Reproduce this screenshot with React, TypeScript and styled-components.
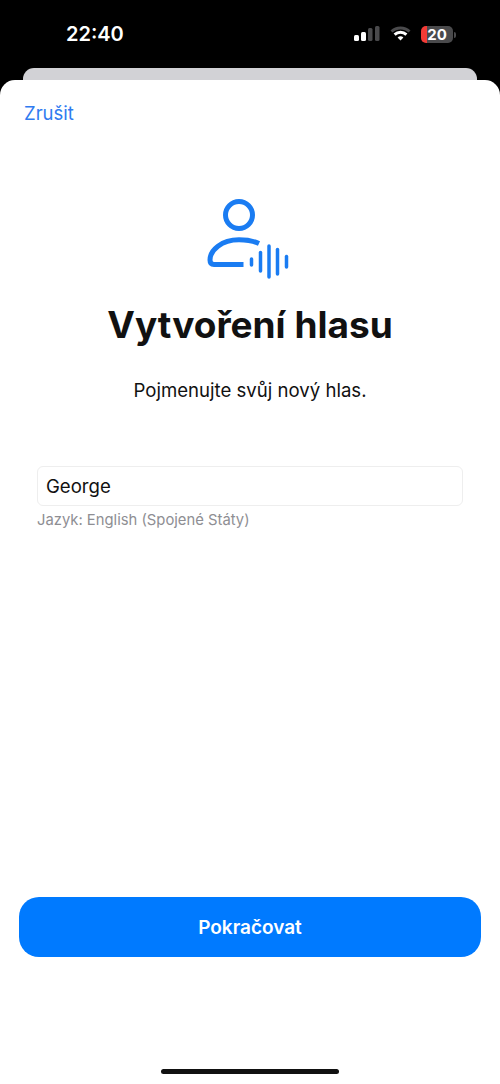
import React from 'react';
import styled, { createGlobalStyle } from 'styled-components';

const GlobalStyle = createGlobalStyle`
    html, body {
        margin: 0;
        padding: 0;
        background: #000;
    }
    * {
        box-sizing: border-box;
    }
`;

const Screen = styled.div`
    width: 500px;
    height: 1084px;
    display: flex;
    flex-direction: column;
    overflow: hidden;
    background: #000;
    font-family: Inter, 'Liberation Sans', sans-serif;
`;

const StatusBar = styled.div`
    height: 68px;
    flex: none;
    display: flex;
    align-items: center;
    justify-content: space-between;
    padding: 0 44px 0 66px;
`;

const Clock = styled.span`
    color: #fff;
    font-size: 20px;
    font-weight: 600;
    line-height: 25px;
`;

const StatusIcons = styled.div`
    display: flex;
    align-items: center;
    gap: 10px;
`;

const Battery = styled.div`
    position: relative;
    width: 32px;
    height: 17px;
    margin-right: 3px;
    border-radius: 5px;
    overflow: visible;
    background: linear-gradient(90deg, #f23b36 0 6px, #4a4a4c 6px);
    display: flex;
    align-items: center;
    justify-content: center;
    color: #fff;
    font-size: 15px;
    font-weight: 700;
    line-height: 17px;
    &::after {
        content: '';
        position: absolute;
        right: -3px;
        top: 6px;
        width: 2px;
        height: 6px;
        border-radius: 0 2px 2px 0;
        background: #4a4a4c;
    }
`;

const BackSheet = styled.div`
    height: 12px;
    flex: none;
    margin: 0 23px;
    border-radius: 11px 11px 0 0;
    background: #d2d2d6;
`;

const Sheet = styled.div`
    flex: 1;
    display: flex;
    flex-direction: column;
    border-radius: 15px 15px 0 0;
    background: #fff;
`;

const CancelLink = styled.a`
    align-self: flex-start;
    margin: 21px 0 0 24px;
    color: #2f7bf0;
    font-size: 18.5px;
    line-height: 24px;
`;

const HeroIcon = styled.svg`
    display: block;
    align-self: center;
    flex: none;
    margin-top: 70px;
`;

const Title = styled.h1`
    margin: 16px 0 0;
    color: #111;
    font-size: 37px;
    font-weight: 700;
    line-height: 48px;
    text-align: center;
`;

const Subtitle = styled.p`
    margin: 29px 0 0;
    color: #111;
    font-size: 18.6px;
    line-height: 24px;
    text-align: center;
`;

const Field = styled.div`
    margin: 64px 37px 0;
    height: 40px;
    display: flex;
    align-items: center;
    padding: 0 8px;
    border: 1px solid #eeeeee;
    border-radius: 6px;
    color: #111;
    font-size: 18.6px;
`;

const FieldHint = styled.div`
    margin: 5px 37px 0;
    color: #8e8e93;
    font-size: 14.8px;
    line-height: 18px;
`;

const PrimaryButton = styled.button`
    margin: auto 19px 0;
    height: 60px;
    flex: none;
    border: 0;
    border-radius: 20px;
    background: #007aff;
    color: #fff;
    font-family: inherit;
    font-size: 19px;
    font-weight: 600;
`;

const HomeArea = styled.div`
    height: 127px;
    flex: none;
    display: flex;
    align-items: flex-end;
    justify-content: center;
    padding-bottom: 10px;
`;

const HomeBar = styled.div`
    width: 178px;
    height: 5px;
    border-radius: 3px;
    background: #111;
`;

function SignalIcon() {
    return (
        <svg width="26" height="16" viewBox="0 0 26 16">
            <rect x="0" y="9" width="5" height="6" rx="1.5" fill="#fff" />
            <rect x="7" y="6" width="5" height="9" rx="1.5" fill="#fff" />
            <rect x="14" y="2" width="4.5" height="13" rx="1.5" fill="#4a4a4c" />
            <rect x="21" y="0" width="4.5" height="15" rx="1.5" fill="#4a4a4c" />
        </svg>
    );
}

function WifiIcon() {
    return (
        <svg width="21" height="16" viewBox="0 0 21 16" fill="none" strokeWidth="3">
            <path d="M1.500 5.500C6.500 0.800 14.500 0.800 19.500 5.500" stroke="#4a4a4c" />
            <path d="M4.600 8.600C8 5.500 13 5.500 16.400 8.600" stroke="#fff" />
            <path d="M7.600 11.400C9.300 10 11.700 10 13.400 11.400L10.500 14.600Z" fill="#fff" stroke="none" />
        </svg>
    );
}

function VoiceIcon() {
    return (
        <HeroIcon width="95" height="90" viewBox="202.500 195 95 90" fill="none" stroke="#1a7cf2" strokeLinecap="round">
            <circle cx="238.500" cy="215" r="13.500" strokeWidth="5" />
            <path d="M258.500 243.500C252 240.500 245 239.800 238.500 239.800C221 239.800 209.500 250 209.500 260C209.500 263 211 264.500 213.500 264.500H243" strokeWidth="5" strokeLinecap="butt" />
            <path d="M251 259V265" strokeWidth="3.500" />
            <path d="M260 252.500V271" strokeWidth="3.500" />
            <path d="M268.500 246V277" strokeWidth="3.500" />
            <path d="M277 249.500V274" strokeWidth="3.500" />
            <path d="M286 256.500V267" strokeWidth="3.500" />
        </HeroIcon>
    );
}

export default function App() {
    return (
        <>
            <GlobalStyle />
            <Screen>
                <StatusBar>
                    <Clock>22:40</Clock>
                    <StatusIcons>
                        <SignalIcon />
                        <WifiIcon />
                        <Battery>20</Battery>
                    </StatusIcons>
                </StatusBar>
                <BackSheet />
                <Sheet>
                    <CancelLink>Zrušit</CancelLink>
                    <VoiceIcon />
                    <Title>Vytvoření hlasu</Title>
                    <Subtitle>Pojmenujte svůj nový hlas.</Subtitle>
                    <Field>George</Field>
                    <FieldHint>Jazyk: English (Spojené Státy)</FieldHint>
                    <PrimaryButton>Pokračovat</PrimaryButton>
                    <HomeArea>
                        <HomeBar />
                    </HomeArea>
                </Sheet>
            </Screen>
        </>
    );
}
